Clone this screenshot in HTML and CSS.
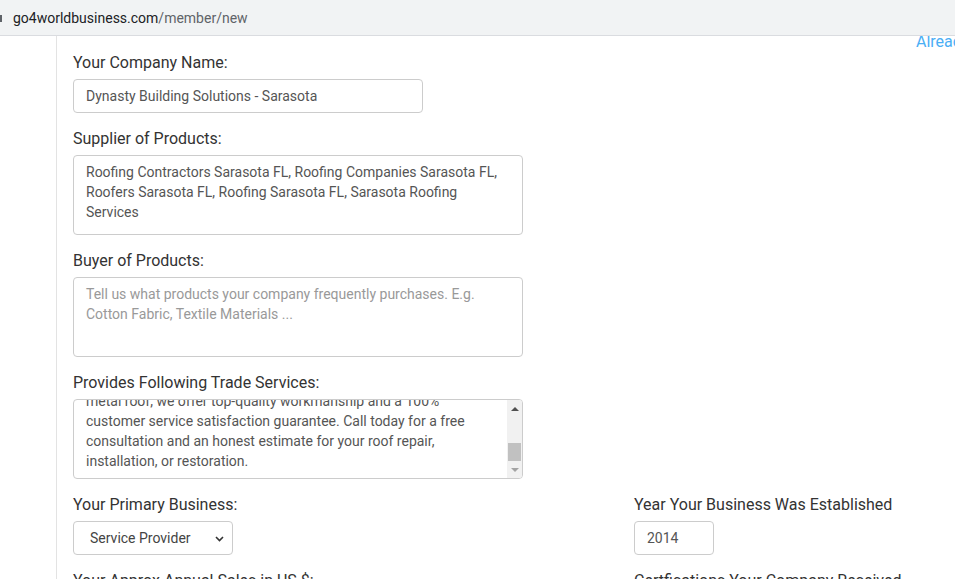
FILE: index.html
```html
<!DOCTYPE html>
<html lang="en">
<head>
<meta charset="utf-8">
<title>Member - New</title>
<link rel="stylesheet" href="styles.css">
</head>
<body>
<div class="urlbar">
  <span class="lock"></span>
  <span class="host">go4worldbusiness.com</span><span class="path">/member/new</span>
</div>
<div class="page">
  <a class="already" href="#">Already a member? Sign In</a>
  <div class="panel">
    <div class="group">
      <label class="label">Your Company Name:</label>
      <input class="control company" type="text" value="Dynasty Building Solutions - Sarasota">
    </div>
    <div class="group">
      <label class="label">Supplier of Products:</label>
      <textarea class="control area">Roofing Contractors Sarasota FL, Roofing Companies Sarasota FL, Roofers Sarasota FL, Roofing Sarasota FL, Sarasota Roofing Services</textarea>
    </div>
    <div class="group">
      <label class="label">Buyer of Products:</label>
      <textarea class="control area" placeholder="Tell us what products your company frequently purchases. E.g. Cotton Fabric, Textile Materials ..."></textarea>
    </div>
    <div class="group">
      <label class="label">Provides Following Trade Services:</label>
      <div class="control fake-area">
        <div class="fa-text">
          <div class="fa-inner">
            <span class="fa-line">metal roof, we offer top-quality workmanship and a 100%</span>
            <span class="fa-line">customer service satisfaction guarantee. Call today for a free</span>
            <span class="fa-line">consultation and an honest estimate for your roof repair,</span>
            <span class="fa-line">installation, or restoration.</span>
          </div>
        </div>
        <div class="sb">
          <div class="sb-btn"><span class="tri-up"></span></div>
          <div class="sb-track"><div class="sb-thumb"></div></div>
          <div class="sb-btn"><span class="tri-down"></span></div>
        </div>
      </div>
    </div>
    <div class="row">
      <div class="col-left">
        <div class="group">
          <label class="label">Your Primary Business:</label>
          <div class="control select">
            <span>Service Provider</span>
            <svg class="chev" width="9" height="6" viewBox="0 0 9 6"><path d="M1 1 L4.5 4.5 L8 1" fill="none" stroke="#333" stroke-width="1.6"/></svg>
          </div>
        </div>
        <div class="group">
          <label class="label">Your Approx Annual Sales in US $:</label>
        </div>
      </div>
      <div class="col-right">
        <div class="group">
          <label class="label">Year Your Business Was Established</label>
          <input class="control year" type="text" value="2014">
        </div>
        <div class="group">
          <label class="label">Certfications Your Company Received</label>
        </div>
      </div>
    </div>
  </div>
</div>
</body>
</html>
```

FILE: styles.css
```css
html, body {
  margin: 0;
  padding: 0;
  background: #fff;
  overflow: hidden;
}
body {
  font-family: Roboto, "Liberation Sans", sans-serif;
  color: #333;
  width: 955px;
  height: 579px;
}
.urlbar {
  height: 35px;
  background: #f1f3f4;
  border-bottom: 1px solid #dadce0;
  display: flex;
  align-items: center;
  font-family: Roboto, "Noto Sans", sans-serif;
  font-size: 14px;
  position: relative;
  z-index: 2;
}
.lock {
  width: 2px;
  height: 7px;
  background: #5f6368;
  margin-right: 11px;
  margin-top: 1px;
}
.host { color: #202124; }
.path { color: #5f6368; }

.page {
  position: relative;
  height: 543px;
  overflow: hidden;
}
.already {
  position: absolute;
  top: -5px;
  left: 916px;
  white-space: nowrap;
  font-size: 16px;
  line-height: 22px;
  color: #4aaef5;
  text-decoration: none;
}
.panel {
  margin-left: 56px;
  border-left: 1px solid #e3e3e3;
  padding: 16px 0 0 16px;
  min-height: 600px;
}
.group {
  margin-bottom: 15px;
}
.label {
  display: block;
  font-size: 16px;
  line-height: 22px;
  margin-bottom: 5px;
  color: #333;
  white-space: nowrap;
}
.control {
  box-sizing: border-box;
  display: block;
  border: 1px solid #ccc;
  border-radius: 4px;
  background: #fff;
  font-family: Roboto, "Liberation Sans", sans-serif;
  font-size: 14px;
  line-height: 20px;
  color: #555;
  padding: 6px 12px;
  margin: 0;
  outline: none;
}
.company { width: 350px; height: 34px; }
.area {
  width: 450px;
  height: 80px;
  resize: none;
  overflow: hidden;
}
.area::placeholder { color: #999; }
.fake-area {
  width: 450px;
  height: 80px;
  padding: 0;
  display: flex;
  overflow: hidden;
}
.fa-text {
  flex: 1;
  overflow: hidden;
  padding: 0 12px;
}
.fa-inner {
  margin-top: -9px;
}
.fa-line {
  display: block;
  white-space: nowrap;
}
.sb {
  width: 15px;
  background: #f1f1f1;
  display: flex;
  flex-direction: column;
}
.sb-btn {
  height: 17px;
  display: flex;
  align-items: center;
  justify-content: center;
}
.tri-up {
  width: 0; height: 0;
  border-left: 4px solid transparent;
  border-right: 4px solid transparent;
  border-bottom: 4px solid #505050;
}
.tri-down {
  width: 0; height: 0;
  border-left: 4px solid transparent;
  border-right: 4px solid transparent;
  border-top: 4px solid #a3a3a3;
}
.sb-track {
  flex: 1;
  display: flex;
  flex-direction: column;
  justify-content: flex-end;
  align-items: center;
}
.sb-thumb {
  width: 13px;
  height: 18px;
  background: #c1c1c1;
}
.row {
  display: flex;
}
.col-left { width: 561px; }
.col-right { flex: 1; }
.select {
  width: 160px;
  height: 34px;
  display: flex;
  align-items: center;
  justify-content: space-between;
  padding: 0 8px 0 16px;
  color: #444;
}
.chev { display: block; margin-top: 1px; }
.year { width: 80px; height: 34px; }
```
